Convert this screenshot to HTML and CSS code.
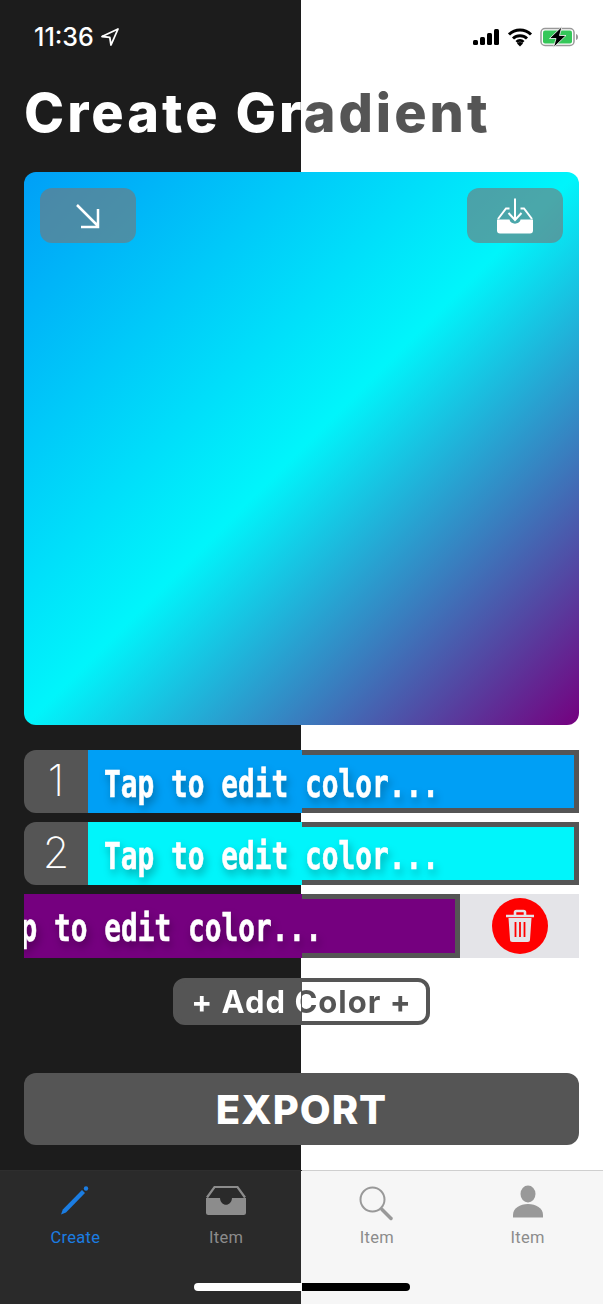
FILE: index.html
```html
<!DOCTYPE html>
<html lang="en">
<head>
    <meta charset="UTF-8">
    <meta name="viewport" content="width=device-width, initial-scale=1.0">
    <title>Create Gradient</title>
    <link rel="stylesheet" href="styles.css">
</head>
<body>
    <!-- status bar -->
    <div class="status-bar">
        <div class="status-time">
            <span>11:36</span>
            <svg width="20" height="20" viewBox="0 0 20 20"><path d="M18 2 2 9.500 9.800 10.400 11 18Z" fill="none" stroke="#fff" stroke-width="1.800" stroke-linejoin="round"/></svg>
        </div>
        <div class="status-icons">
            <svg width="28" height="18" viewBox="0 0 28 18"><rect x="1" y="12" width="5" height="5" rx="1.500"/><rect x="8" y="9" width="5" height="8" rx="1.500"/><rect x="15" y="5" width="5" height="12" rx="1.500"/><rect x="22" y="1" width="5" height="16" rx="1.500"/></svg>
            <svg width="26" height="20" viewBox="0 0 26 20"><path d="M2 7.500a16 16 0 0 1 22 0M6 11.500a10.300 10.300 0 0 1 14 0M9.500 15a5 5 0 0 1 7 0" fill="none" stroke="#000" stroke-width="3"/><path d="M13 19.500 10 16.500a4.300 4.300 0 0 1 6 0Z"/></svg>
            <svg width="39" height="22" viewBox="0 0 39 22"><rect x="1" y="2.500" width="33" height="17" rx="4" fill="#fff" stroke="#999" stroke-width="1.500"/><rect x="3" y="4.500" width="29" height="13" rx="2" fill="#35c759"/><path d="M36 8v6c1.500-.5 2-1.500 2-3s-.5-2.500-2-3Z" fill="#999"/><path d="M22 .5 9.500 12.500h6.500L13.500 21.500 26 9.500h-6.500Z" stroke="#fff" stroke-width=".8"/></svg>
        </div>
    </div>

    <h1 class="title split-text">Create Gradient</h1>

    <div class="content">
        <!-- gradient preview -->
        <div class="preview">
            <button class="preview-button">
                <svg width="30" height="30" viewBox="0 0 30 30"><path d="M4 4 25 25M25 8V26H8" fill="none" stroke="#fff" stroke-width="2.500"/></svg>
            </button>
            <button class="preview-button">
                <svg width="40" height="40" viewBox="0 0 40 40"><path d="M3 23 11 12.500H14.500M37 23 29 12.500H25.500" fill="none" stroke="#fff" stroke-width="2"/><path d="M2 23.500H14.500C15 29 25 29 25.500 23.500H38V34.500A3 3 0 0 1 35 37.500H5A3 3 0 0 1 2 34.500Z" fill="#fff"/><path d="M20 2.500V24M13.500 17 20 24 26.500 17" fill="none" stroke="#fff" stroke-width="2"/></svg>
            </button>
        </div>

        <!-- color rows -->
        <div class="color-list">
            <div class="color-row">
                <div class="color-index">1</div>
                <div class="color-cell color-blue"><span class="color-label">Tap to edit color...</span></div>
            </div>
            <div class="color-row">
                <div class="color-index">2</div>
                <div class="color-cell color-cyan"><span class="color-label">Tap to edit color...</span></div>
            </div>
            <div class="color-row">
                <div class="color-cell color-purple swiped"><span class="color-label">Tap to edit color...</span></div>
                <div class="delete-cell">
                    <div class="delete-circle">
                        <svg width="32" height="34" viewBox="0 0 32 34"><path d="M2 7H30M11 7V3.500A1.500 1.500 0 0 1 12.500 2H19.500A1.500 1.500 0 0 1 21 3.500V7" fill="none" stroke="#e4e4e8" stroke-width="2.600"/><path d="M4.500 9H27.500L26 30.500A2.500 2.500 0 0 1 23.500 33H8.500A2.500 2.500 0 0 1 6 30.500Z" fill="#e4e4e8"/><path d="M11.500 13V28M16 13V28M20.500 13V28" stroke="#f00" stroke-width="1.800"/></svg>
                    </div>
                </div>
            </div>
        </div>

        <div class="add-wrap">
            <button class="add-button"><span class="split-text">+ Add Color +</span></button>
        </div>

        <button class="export-button">EXPORT</button>
    </div>

    <!-- tab bar -->
    <div class="tab-bar">
        <div class="tabs">
            <div class="tab tab-active">
                <svg width="44" height="44" viewBox="0 0 44 44"><path d="M8 32.500 9.800 27.500 29 8 32 11 13 30.500Z" fill="#1b7de2"/><circle cx="33" cy="6.500" r="2.200" fill="#1b7de2"/></svg>
                <span>Create</span>
            </div>
            <div class="tab">
                <svg width="44" height="44" viewBox="0 0 44 44"><path d="M3 15.500 10.500 5H33.500L41 15.500" fill="none" stroke="#8c8c8c" stroke-width="2.200"/><path d="M2 16H16C16.500 25 27.500 25 28 16H42V30.500A2.500 2.500 0 0 1 39.500 33H4.500A2.500 2.500 0 0 1 2 30.500Z" fill="#8c8c8c"/></svg>
                <span>Item</span>
            </div>
            <div class="tab">
                <svg width="44" height="44" viewBox="0 0 44 44"><circle cx="17.500" cy="17.500" r="12" fill="none" stroke="#999" stroke-width="2"/><path d="M27 27.500 36 36.500" stroke="#999" stroke-width="3.500" stroke-linecap="round"/></svg>
                <span>Item</span>
            </div>
            <div class="tab">
                <svg width="44" height="44" viewBox="0 0 44 44"><ellipse cx="22" cy="12" rx="7.500" ry="8.500" fill="#999"/><path d="M7 35.500V33C7 26 14 22 22 22S37 26 37 33V35.500Z" fill="#999"/></svg>
                <span>Item</span>
            </div>
        </div>
        <div class="home-indicator"></div>
    </div>
</body>
</html>
```

FILE: styles.css
```css
/* page is split: dark theme on the left half, light on the right */
:root {
    --split: 301.5px;
    --dark-bg: #1c1c1c;
    --grey: #555555;
    --radius: 12px;
}

* {
    margin: 0;
    padding: 0;
    box-sizing: border-box;
}

body {
    width: 603px;
    height: 1304px;
    display: flex;
    flex-direction: column;
    overflow: hidden;
    font-family: "Inter", "Liberation Sans", sans-serif;
    background: linear-gradient(90deg, var(--dark-bg) var(--split), #fff var(--split));
}

button {
    border: none;
    font-family: inherit;
}

/* text that is white on the dark half and grey on the light half */
.split-text {
    background: linear-gradient(90deg, #fff var(--split), var(--grey) var(--split)) fixed;
    -webkit-background-clip: text;
    background-clip: text;
    color: transparent;
}

/* status bar */
.status-bar {
    height: 74px;
    display: flex;
    justify-content: space-between;
    align-items: center;
    padding: 0 24px 0 34px;
}

.status-time {
    display: flex;
    align-items: center;
    gap: 6px;
    color: #fff;
    font-size: 25px;
    font-weight: 500;
}

.status-icons {
    display: flex;
    align-items: center;
    gap: 7px;
}

/* title */
.title {
    height: 78px;
    margin-bottom: 20px;
    padding-left: 24px;
    font-size: 54px;
    font-weight: 800;
    line-height: 78px;
    letter-spacing: 3px;
}

.content {
    padding: 0 24px;
}

/* gradient preview */
.preview {
    height: 553px;
    display: flex;
    justify-content: space-between;
    align-items: flex-start;
    padding: 16px;
    border-radius: var(--radius);
    background: linear-gradient(135deg, #009ff7 0%, #00f5fb 50%, #75007f 100%);
}

.preview-button {
    width: 96px;
    height: 55px;
    display: flex;
    justify-content: center;
    align-items: center;
    border-radius: var(--radius);
    background-color: rgba(120, 120, 120, 0.62);
}

/* color rows */
.color-list {
    display: flex;
    flex-direction: column;
    gap: 9px;
    margin-top: 25px;
}

.color-row {
    height: 63px;
    display: flex;
}

.color-row:last-child {
    height: 64px;
}

.color-index {
    width: 64px;
    display: flex;
    justify-content: center;
    align-items: center;
    padding-bottom: 4px;
    border-radius: var(--radius) 0 0 var(--radius);
    background-color: var(--grey);
    color: #fff;
    font-size: 43px;
    font-weight: 200;
}

.color-cell {
    position: relative;
    flex: 1;
    display: flex;
    align-items: center;
    overflow: hidden;
    padding: 5px 0 0 16px;
}

/* the border only shows on the light half */
.color-cell::after {
    content: "";
    position: absolute;
    top: 0;
    left: calc(var(--split) - 88px);
    right: 0;
    bottom: 0;
    border: 5px solid var(--grey);
    border-left: none;
}

.color-blue { background-color: #009ff5; }
.color-cyan { background-color: #00f5fb; }
.color-purple { background-color: #75007f; }

.color-cell.swiped {
    flex: none;
    width: 436px;
    padding-left: 0;
}

.color-cell.swiped::after {
    left: calc(var(--split) - 24px);
}

.color-label {
    flex: none;
    width: 440px;
    color: #fff;
    font-family: "DejaVu Sans Mono", monospace;
    font-size: 37px;
    font-weight: 700;
    white-space: nowrap;
    -webkit-text-stroke: 0.6px #fff;
    text-shadow: 3px 5px 10px rgba(0, 0, 0, 0.35);
    transform: scaleX(0.752);
    transform-origin: left center;
}

.swiped .color-label {
    margin-left: -37px;
}

.delete-cell {
    flex: 1;
    display: flex;
    justify-content: center;
    align-items: center;
    background-color: #e4e4e8;
}

.delete-circle {
    width: 56px;
    height: 56px;
    display: flex;
    justify-content: center;
    align-items: center;
    border-radius: 50%;
    background-color: #ff0000;
}

/* add color */
.add-wrap {
    display: flex;
    justify-content: center;
    margin-top: 20px;
}

.add-button {
    width: 257px;
    height: 47px;
    display: flex;
    justify-content: center;
    align-items: center;
    border: 4px solid var(--grey);
    border-radius: var(--radius);
    background: linear-gradient(90deg, var(--grey) 124.500px, #fff 124.500px);
    font-size: 31px;
    font-weight: 700;
    letter-spacing: 1px;
}

/* export */
.export-button {
    width: 100%;
    height: 72px;
    margin-top: 48px;
    border-radius: var(--radius);
    background-color: var(--grey);
    color: #fff;
    font-size: 40px;
    font-weight: 800;
    letter-spacing: 1px;
}

/* tab bar */
.tab-bar {
    flex: 1;
    display: flex;
    flex-direction: column;
    margin-top: 25px;
    border-top: 1px solid;
    border-image: linear-gradient(90deg, #2e2e2e var(--split), #cfcfcf var(--split)) 1;
    background: linear-gradient(90deg, #2a2a2a var(--split), #f6f6f6 var(--split));
}

.tabs {
    display: grid;
    grid-template-columns: repeat(4, 1fr);
    padding-top: 11px;
}

.tab {
    display: flex;
    flex-direction: column;
    align-items: center;
    gap: 2px;
    color: #8c8c8c;
    font-family: "Roboto", sans-serif;
    font-size: 16.500px;
    letter-spacing: 0.3px;
}

.tab-active {
    color: #1b7de2;
}

.home-indicator {
    align-self: center;
    width: 216px;
    height: 8px;
    margin-top: auto;
    margin-bottom: 13px;
    border-radius: 4px;
    background: linear-gradient(90deg, #fff 50%, #000 50%);
}
```
